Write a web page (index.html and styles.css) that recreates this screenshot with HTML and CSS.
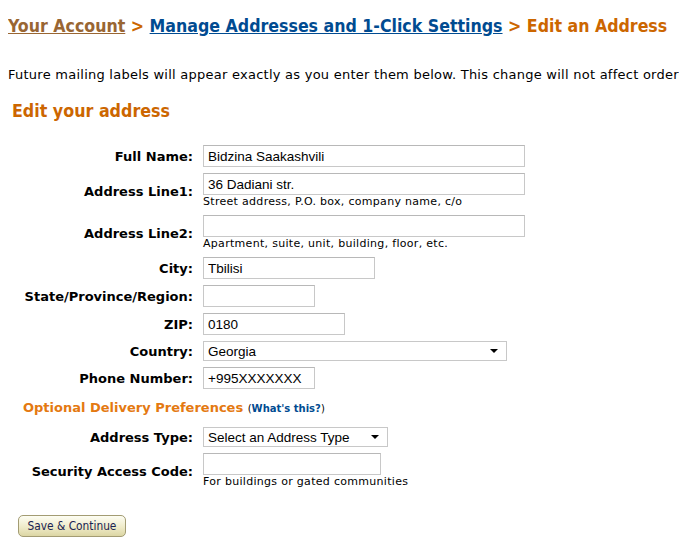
FILE: index.html
```html
<!DOCTYPE html>
<html>
<head>
<meta charset="utf-8">
<link rel="stylesheet" href="styles.css">
</head>
<body>
<div class="crumbs">
  <a class="crumb-visited" href="#">Your Account</a>
  <span class="sep">&gt;</span>
  <a class="crumb-link" href="#">Manage Addresses and 1-Click Settings</a>
  <span class="sep">&gt;</span>
  <span class="crumb-current">Edit an Address</span>
</div>
<p class="intro">Future mailing labels will appear exactly as you enter them below. This change will not affect orders currently in progress.</p>
<h2 class="section-title">Edit your address</h2>
<form class="form">
  <div class="row">
    <label class="lbl">Full Name:</label>
    <div class="field"><input class="inp w-full" type="text" value="Bidzina Saakashvili"></div>
  </div>
  <div class="row">
    <label class="lbl">Address Line1:</label>
    <div class="field"><input class="inp w-full" type="text" value="36 Dadiani str."><div class="hint">Street address, P.O. box, company name, c/o</div></div>
  </div>
  <div class="row">
    <label class="lbl">Address Line2:</label>
    <div class="field"><input class="inp w-full" type="text" value=""><div class="hint">Apartment, suite, unit, building, floor, etc.</div></div>
  </div>
  <div class="row">
    <label class="lbl">City:</label>
    <div class="field"><input class="inp w-city" type="text" value="Tbilisi"></div>
  </div>
  <div class="row">
    <label class="lbl">State/Province/Region:</label>
    <div class="field"><input class="inp w-state" type="text" value=""></div>
  </div>
  <div class="row">
    <label class="lbl">ZIP:</label>
    <div class="field"><input class="inp w-zip" type="text" value="0180"></div>
  </div>
  <div class="row row-sel">
    <label class="lbl">Country:</label>
    <div class="field"><div class="sel w-country"><span>Georgia</span><i class="arrow"></i></div></div>
  </div>
  <div class="row">
    <label class="lbl">Phone Number:</label>
    <div class="field"><input class="inp w-state" type="text" value="+995XXXXXXX"></div>
  </div>
  <div class="opt">Optional Delivery Preferences <span class="paren">(<a href="#">What's this?</a>)</span></div>
  <div class="row row-sel">
    <label class="lbl">Address Type:</label>
    <div class="field"><div class="sel w-type"><span>Select an Address Type</span><i class="arrow"></i></div></div>
  </div>
  <div class="row">
    <label class="lbl">Security Access Code:</label>
    <div class="field"><input class="inp w-code" type="text" value=""><div class="hint">For buildings or gated communities</div></div>
  </div>
  <div class="actions"><button class="btn" type="button">Save &amp; Continue</button></div>
</form>
</body>
</html>
```
FILE: styles.css
```css
html, body { background: #fff; }
body {
  margin: 8px;
  font-family: "DejaVu Sans Condensed", "DejaVu Sans", sans-serif;
  color: #000;
  overflow: hidden;
}
.crumbs {
  margin-top: 6px;
  font-size: 17.6px;
  font-weight: bold;
  white-space: nowrap;
  line-height: 24px;
}
.crumbs a { text-decoration: underline; }
.crumb-visited { color: #996633; }
.crumb-link { color: #004b91; }
.sep { color: #cc6600; }
.crumb-current { color: #cc6600; }
.intro {
  margin: 29px 0 0;
  font-family: "DejaVu Sans", sans-serif;
  font-size: 13px;
  letter-spacing: 0.25px;
  white-space: nowrap;
  line-height: 16px;
}
.section-title {
  margin: 17px 0 0 4px;
  font-size: 17.7px;
  font-weight: bold;
  color: #cc6600;
  line-height: 22px;
}
.form { margin-top: 23px; }
.row {
  display: flex;
  align-items: center;
  margin-bottom: 6px;
}
.lbl {
  width: 185px;
  flex: none;
  text-align: right;
  font-family: "DejaVu Sans", Verdana, sans-serif;
  font-weight: bold;
  font-size: 13px;
  padding-right: 10px;
}
.field { display: flex; flex-direction: column; }
.inp {
  box-sizing: border-box;
  height: 22px;
  border: 1px solid #c8c8c8;
  border-top-color: #b8b8b8;
  padding: 0 4px;
  font-family: "Liberation Sans", Arial, sans-serif;
  font-size: 13.5px;
  color: #000;
  margin: 0;
  outline: none;
}
.w-full { width: 322px; }
.w-city { width: 172px; }
.w-state { width: 112px; }
.w-zip { width: 142px; }
.w-code { width: 178px; }
.w-country { width: 304px; }
.w-type { width: 185px; }
.hint {
  font-family: "DejaVu Sans", Verdana, sans-serif;
  font-size: 11px;
  letter-spacing: 0.3px;
  line-height: 14px;
}
.sel {
  box-sizing: border-box;
  height: 20px;
  border: 1px solid #c8c8c8;
  display: flex;
  align-items: center;
  justify-content: space-between;
  padding: 0 8px 0 4px;
  font-family: "Liberation Sans", Arial, sans-serif;
  font-size: 13.5px;
}
.arrow {
  width: 0;
  height: 0;
  border-left: 4px solid transparent;
  border-right: 4px solid transparent;
  border-top: 4px solid #000;
}
.opt {
  margin: 11px 0 12px 15px;
  font-family: "DejaVu Sans", Verdana, sans-serif;
  font-weight: bold;
  font-size: 13px;
  color: #e47911;
}
.paren {
  color: #000;
  font-size: 10px;
  font-weight: normal;
}
.paren a { color: #004b91; font-weight: bold; text-decoration: none; }
.actions { margin: 26px 0 0 10px; }
.btn {
  box-sizing: border-box;
  width: 108px;
  height: 22px;
  border: 1px solid #a39c73;
  border-radius: 5px;
  background: linear-gradient(#fdfdf3, #efebc9 55%, #dcd6a4);
  font-family: "DejaVu Sans Condensed", "DejaVu Sans", sans-serif;
  font-size: 11.8px;
  color: #1a2352;
  padding: 0;
}
```
